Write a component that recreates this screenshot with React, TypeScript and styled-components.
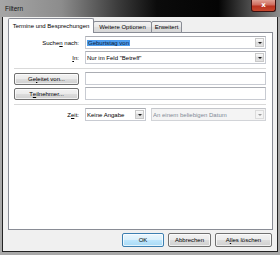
import React from 'react'
import styled, {createGlobalStyle} from "styled-components";

const GlobalStyle = createGlobalStyle`
  html, body {
    margin: 0;
    padding: 0;
    background: #ffffff;
  }
  body {
    font-family: "Liberation Sans", Arial, sans-serif;
    font-size: 6px;
    color: #000;
  }
`;

const Window = styled.div`
  width: 280px;
  height: 255px;
  box-sizing: border-box;
  display: flex;
  flex-direction: column;
  background: #a9a9a9;
  overflow: hidden;
`;

const TitleBar = styled.div`
  height: 17px;
  flex: none;
  display: flex;
  align-items: flex-start;
  justify-content: space-between;
  padding: 0 4px 0 5px;
  background: linear-gradient(90deg, #a6a6a6 0%, #8c8c8c 22%, #3c3c3c 42%, #0b0b0b 56%, #040404 78%, #444444 88%, #8d8d8d 100%);
`;

const Title = styled.span`
  margin-top: 5px;
  font-size: 6.5px;
  color: #111;
`;

const CloseButton = styled.div`
  width: 25px;
  height: 12px;
  box-sizing: border-box;
  border: 1px solid #3b1010;
  border-top: none;
  border-radius: 0 0 3px 3px;
  background: linear-gradient(#e0a195 0%, #cf6a5c 45%, #b8321f 55%, #c8482f 100%);
  display: flex;
  align-items: center;
  justify-content: center;
  color: #fff;
  font-family: "DejaVu Sans", sans-serif;
  font-weight: bold;
  font-size: 7px;
  line-height: 1;
`;

const Client = styled.div`
  flex: 1;
  margin: 0 2px 3px 2px;
  border: 1px solid #232323;
  border-top: none;
  background: #f0f0f0;
  display: flex;
  flex-direction: column;
  padding: 2px 4px 4px 5px;
  min-height: 0;
`;

const TabStrip = styled.div`
  display: flex;
  align-items: flex-end;
  height: 14px;
  flex: none;
  position: relative;
  z-index: 1;
  margin-bottom: -1px;
`;

const Tab = styled.div<{ $active?: boolean; $width: number }>`
  width: ${p => p.$width}px;
  height: ${p => p.$active ? 15 : 12}px;
  box-sizing: border-box;
  border: 1px solid #898c95;
  border-bottom: ${p => p.$active ? 'none' : '1px solid #898c95'};
  margin-left: ${p => p.$active ? 0 : -1}px;
  border-radius: 2px 2px 0 0;
  background: ${p => p.$active ? '#ffffff' : 'linear-gradient(#f3f3f3, #e8e8e8 50%, #dedede 50%, #d8d8d8)'};
  display: flex;
  align-items: center;
  justify-content: center;
  padding-bottom: ${p => p.$active ? 1 : 0}px;
  white-space: nowrap;
`;

const Panel = styled.div`
  flex: 1;
  box-sizing: border-box;
  background: #ffffff;
  border: 1px solid #898c95;
  padding: 3px 6px 0 5px;
  display: flex;
  flex-direction: column;
  gap: 2px;
`;

const Row = styled.div`
  display: grid;
  grid-template-columns: 66px 1fr;
  column-gap: 5px;
  height: 13px;
  align-items: center;
`;

const Label = styled.span`
  text-align: right;
  padding-right: 1px;
  white-space: nowrap;
`;

const U = styled.span`
  text-decoration: underline;
`;

const Separator = styled.div`
  height: 1px;
  margin: 2px 0 1px;
  background: #d9d9d9;
`;

const Field = styled.div<{ $disabled?: boolean; $width?: number }>`
  ${p => p.$width ? `width: ${p.$width}px;` : 'flex: 1; min-width: 0;'}
  height: 13px;
  box-sizing: border-box;
  border: 1px solid ${p => p.$disabled ? '#d2d4d8' : '#c8cbd2'};
  border-top-color: ${p => p.$disabled ? '#c4c6cb' : '#abadb3'};
  background: ${p => p.$disabled ? '#f4f4f4' : '#ffffff'};
  color: ${p => p.$disabled ? '#7f8a96' : '#000'};
  display: flex;
  align-items: center;
  padding: 0 1px 0 1px;
  gap: 2px;
`;

const FieldText = styled.span`
  flex: 1;
  min-width: 0;
  white-space: nowrap;
  overflow: hidden;
`;

const Selected = styled.span`
  background: #4c9cee;
  color: #0d1a33;
  padding: 0 1px;
`;

const Arrow = styled.span<{ $disabled?: boolean }>`
  width: 9px;
  height: 9px;
  flex: none;
  box-sizing: border-box;
  border: 1px solid ${p => p.$disabled ? '#dcdcdc' : '#c9c9c9'};
  background: ${p => p.$disabled ? '#f4f4f4' : 'linear-gradient(#fbfbfb, #e6e6e6 50%, #dadada 50%, #e4e4e4)'};
  display: flex;
  align-items: center;
  justify-content: center;

  &::after {
    content: '';
    border-left: 2px solid transparent;
    border-right: 2px solid transparent;
    border-top: 2px solid ${p => p.$disabled ? '#9a9a9a' : '#1a1a1a'};
  }
`;

const Pair = styled.div`
  display: flex;
  gap: 5px;
  height: 13px;
`;

const Button = styled.div<{ $default?: boolean; $width: number }>`
  width: ${p => p.$width}px;
  height: ${p => p.$default !== undefined ? 14 : 12}px;
  box-sizing: border-box;
  border: 1px solid ${p => p.$default ? '#3c7fb1' : '#707070'};
  border-radius: 2px;
  background: ${p => p.$default
    ? 'linear-gradient(#eaf6fd 0%, #d9f0fc 50%, #bee6fd 50%, #a7d9f5 100%)'
    : 'linear-gradient(#f2f2f2 0%, #ebebeb 50%, #dddddd 50%, #cfcfcf 100%)'};
  box-shadow: inset 0 0 0 1px rgba(255, 255, 255, 0.7);
  display: flex;
  align-items: center;
  justify-content: center;
  white-space: nowrap;
`;

const Footer = styled.div`
  display: flex;
  justify-content: flex-end;
  gap: 4px;
  margin-top: 3px;
  padding-right: 1px;
  flex: none;
`;

export default function App() {
    return (
        <>
            <GlobalStyle/>
            <Window>
                <TitleBar>
                    <Title>Filtern</Title>
                    <CloseButton>x</CloseButton>
                </TitleBar>
                <Client>
                    <TabStrip>
                        <Tab $active $width={86}>Termine und Besprechungen</Tab>
                        <Tab $width={59}>Weitere Optionen</Tab>
                        <Tab $width={31}>Erweitert</Tab>
                    </TabStrip>
                    <Panel>
                        <Row>
                            <Label>Suche<U>n</U> nach:</Label>
                            <Field>
                                <FieldText><Selected>Geburtstag von</Selected></FieldText>
                                <Arrow/>
                            </Field>
                        </Row>
                        <Row>
                            <Label><U>I</U>n:</Label>
                            <Field>
                                <FieldText>Nur im Feld &quot;Betreff&quot;</FieldText>
                                <Arrow/>
                            </Field>
                        </Row>
                        <Separator/>
                        <Row>
                            <Button $width={65}>Ge<U>l</U>eitet von...</Button>
                            <Field/>
                        </Row>
                        <Row>
                            <Button $width={65}>T<U>e</U>ilnehmer...</Button>
                            <Field/>
                        </Row>
                        <Separator/>
                        <Row>
                            <Label>Z<U>e</U>it:</Label>
                            <Pair>
                                <Field $width={61}>
                                    <FieldText>Keine Angabe</FieldText>
                                    <Arrow/>
                                </Field>
                                <Field $disabled>
                                    <FieldText>An einem beliebigen Datum</FieldText>
                                    <Arrow $disabled/>
                                </Field>
                            </Pair>
                        </Row>
                    </Panel>
                    <Footer>
                        <Button $default $width={42}>OK</Button>
                        <Button $default={false} $width={43}>Abbrechen</Button>
                        <Button $default={false} $width={57}>A<U>l</U>les löschen</Button>
                    </Footer>
                </Client>
            </Window>
        </>
    )
}
